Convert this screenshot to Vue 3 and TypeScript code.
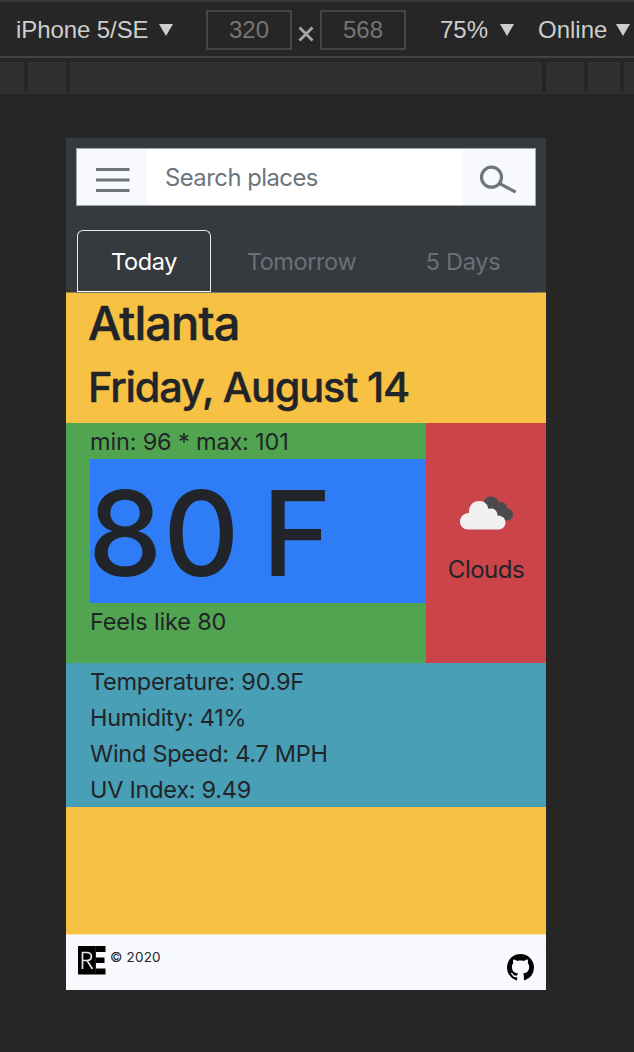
<script setup lang="ts">
const sizes = { width: 320, height: 568 }
const tabs = ['Today', 'Tomorrow', '5 Days']
const details = [
  { label: 'Temperature', value: '90.9F', key: 'temp' },
  { label: 'Humidity', value: '41%', key: 'hum' },
  { label: 'Wind Speed', value: '4.7 MPH', key: 'wind' },
  { label: 'UV Index', value: '9.49', key: 'uv' },
]
</script>

<template>
  <div class="screen">
    <header class="toolbar">
      <span class="choice device-name">iPhone 5/SE <svg class="arrow" viewBox="0 0 14 12"><path d="M0 0H14L7 12Z" /></svg></span>
      <span class="size">{{ sizes.width }}</span>
      <svg class="times" viewBox="0 0 16 16"><path d="M1.5 1.5L14.5 14.5M14.5 1.5L1.5 14.5" /></svg>
      <span class="size">{{ sizes.height }}</span>
      <span class="choice zoom">75% <svg class="arrow" viewBox="0 0 14 12"><path d="M0 0H14L7 12Z" /></svg></span>
      <span class="choice network">Online <svg class="arrow" viewBox="0 0 14 12"><path d="M0 0H14L7 12Z" /></svg></span>
    </header>
    <div class="ruler"><i /><i /><i /><i /><i /><i /></div>

    <main class="phone">
      <div class="top">
        <div class="search">
          <button class="menu" aria-label="Menu">
            <svg width="34" height="25" viewBox="0 0 34 25"><path d="M0 1.5H33.5M0 12H33.5M0 22.5H33.5" /></svg>
          </button>
          <div class="field"><span>Search places</span></div>
          <button class="go" aria-label="Search">
            <svg width="38" height="32" viewBox="0 0 38 32"><circle cx="12.500" cy="12.2" r="10" /><path d="M21.2 18.8L36.7 27.2" /></svg>
          </button>
        </div>
        <nav class="tabs">
          <a v-for="(tab, i) in tabs" :key="tab" :class="['tab', 'tab' + i, { active: i === 0 }]"><span>{{ tab }}</span></a>
        </nav>
      </div>
      <section class="place">
        <h1>Atlanta</h1>
        <h2>Friday, August 14</h2>
      </section>
      <section class="current">
        <div class="reading">
          <p><span class="range">min: 96 * max: 101</span></p>
          <div class="degrees"><span>80 F</span></div>
          <p><span class="feels">Feels like 80</span></p>
        </div>
        <div class="sky">
          <svg width="56" height="36" viewBox="0 0 56 36">
            <path class="dark" d="M24 10C25 4 28 1.5 32 1.5C36 1.5 38.5 3.500 40 7.500C45 6.500 48 9 48.500 13.500C52 14 54 16.500 54 20C54 23.500 51 25.500 48 25.500H38Z" />
            <path class="light" d="M9.500 34.500C4.500 34.500 1 31 1 26.500C1 21.500 5 18.500 10 18C9.500 10.500 14 6 20.500 6C25.500 6 28.500 9 29.500 14C34.500 12.500 38.500 15.500 38.500 20.500C43.500 20.500 46.500 23.500 46.500 27.500C46.500 31.500 43.500 34.500 39.500 34.500Z" />
          </svg>
          <span>Clouds</span>
        </div>
      </section>
      <section class="details">
        <p v-for="d in details" :key="d.key"><span :class="d.key">{{ d.label }}: {{ d.value }}</span></p>
      </section>
      <div class="space" />
      <footer>
        <svg class="logo" width="28" height="29" viewBox="0 0 28 29">
          <path d="M0 0H27.500V6H18V11.500H26.500V17H18V22.500H27.500V28.500H0Z" />
          <path class="letter" d="M4.500 23V6.500H8.500C15 6.500 15 14.500 8.500 14.500H4.500M9 14.500L14.500 23" />
          <path class="seam" d="M17.500 0V28.500" />
        </svg>
        <span class="copy">© 2020</span>
        <svg class="github" width="27" height="27" viewBox="0 0 16 16"><path d="M8 0C3.580 0 0 3.580 0 8c0 3.540 2.290 6.530 5.470 7.590.4.070.55-.17.55-.38 0-.19-.01-.82-.01-1.490-2.010.37-2.530-.49-2.690-.94-.09-.23-.48-.94-.82-1.130-.28-.15-.68-.52-.01-.53.63-.01 1.080.58 1.230.82.72 1.210 1.870.87 2.330.66.07-.52.28-.87.51-1.070-1.780-.2-3.640-.89-3.640-3.950 0-.87.31-1.590.82-2.150-.08-.2-.36-1.020.08-2.120 0 0 .67-.21 2.200.82.64-.18 1.320-.27 2-.27s1.360.09 2 .27c1.530-1.040 2.200-.82 2.200-.82.44 1.100.16 1.920.08 2.120.51.56.82 1.270.82 2.150 0 3.070-1.870 3.750-3.650 3.950.29.25.54.73.54 1.480 0 1.070-.01 1.930-.01 2.200 0 .21.15.46.55.38A8 8 0 0 0 16 8c0-4.420-3.580-8-8-8Z" /></svg>
      </footer>
    </main>
  </div>
</template>

<style>
body { background: #262626; }
</style>

<style scoped>
* { box-sizing: border-box; margin: 0; }
.screen { width: 634px; height: 1052px; overflow: hidden; background: #262626; font-family: Inter, "Noto Sans", sans-serif; color: #212529; }
.toolbar { display: flex; height: 58px; border-top: 2px solid #35353b; border-bottom: 2px solid #444; font: 24px/56px "Liberation Sans", sans-serif; color: #cdcdcd; white-space: nowrap; }
.choice { display: flex; align-items: center; gap: 10px; padding-top: 2px; }
.device-name { width: 190px; margin-left: 16px; letter-spacing: -.08px; }
.zoom { width: 98px; margin-left: 34px; gap: 12px; }
.network { gap: 9px; }
.arrow { width: 14px; height: 12px; margin-top: -1px; fill: #cdcdcd; flex: none; }
.size { width: 86px; height: 40px; margin-top: 8px; border: 2px solid #464646; color: #757575; line-height: 36px; text-align: center; }
.times { width: 16px; height: 16px; margin: 24px 6px 0; fill: none; stroke: #a8a8a8; stroke-width: 2.8; }
.ruler { display: grid; grid-template-columns: 24px 38px 472px 38px 32px 10px; column-gap: 4px; height: 32px; margin-top: 4px; background: linear-gradient(#262626 30px, #303030 30px); }
.ruler i { background: #303030; }
.phone { width: 480px; height: 852px; margin: 44px 0 0 66px; display: flex; flex-direction: column; box-shadow: 0 0 40px rgba(45, 43, 42, .6); }
.top { height: 155px; padding: 10px 10px 0; background: linear-gradient(#353a3e 154px, #9c8349 154px); flex: none; }
.search { display: grid; grid-template-columns: 70px 315px 1fr; grid-template-rows: 56px; height: 58px; border: 1px solid #a1a6aa; }
button { border: 0; padding: 0; background: #f8f9fc; }
.menu { display: flex; padding: 19px 0 0 19px; }
.search svg { fill: none; stroke: #6e757d; stroke-width: 3; }
.go { display: flex; padding: 16px 0 0 17px; }
.go svg { stroke-width: 3.200; }
.field { background: #fff; padding-left: 18px; font-size: 23.800px; line-height: 58px; color: #6c757d; white-space: nowrap; letter-spacing: -.5px; }
.tabs { display: flex; height: 63px; margin: 24px 0 0; border-bottom: 1px solid #707478; font-size: 23.500px; }
.tab { height: 62px; line-height: 64px; text-align: center; color: #6b6f78; }
.tab0 { width: 136px; letter-spacing: -.4px; }
.tab1 { width: 179px; letter-spacing: -.4px; }
.tab2 { width: 144px; letter-spacing: -.3px; }
.active { width: 134px; margin: 0 1px; line-height: 62px; color: #fff; border: 1px solid #e8e9ea; border-bottom: 1px solid #fff; border-radius: 6px 6px 0 0; }
.place { height: 130px; padding-left: 23px; background: #f7c143; flex: none; }
h1 { font-size: 47px; line-height: 59px; font-weight: 500; letter-spacing: -.950px; text-indent: -1px; -webkit-text-stroke: .5px #212529; }
h2 { font-size: 41.500px; line-height: 70px; font-weight: 500; letter-spacing: -1.200px; text-indent: -1px; white-space: nowrap; -webkit-text-stroke: .4px #212529; }
.current { display: grid; grid-template-columns: 360px 120px; height: 240px; flex: none; }
.reading { padding-left: 24px; background: #52a550; }
p { height: 36px; line-height: 37px; font-size: 23.500px; white-space: nowrap; letter-spacing: -.27px; }
.range, .feels { letter-spacing: -.17px; }
.degrees { height: 144px; line-height: 148px; background: #2e7df7; font-size: 118px; font-weight: 500; white-space: nowrap; letter-spacing: 1px; word-spacing: -11px; text-indent: -2px; }
.sky { display: flex; flex-direction: column; align-items: center; background: #cb444a; padding-top: 72px; font-size: 24px; }
.sky svg { overflow: visible; margin-left: 1px; }
.sky span { margin-top: 24px; line-height: 30px; letter-spacing: -.5px; }
.dark { fill: #4b4b4d; }
.light { fill: #f0f0f0; }
.details { height: 144px; padding-left: 24px; background: #499fb5; flex: none; }
.space { height: 127px; background: #f7c143; flex: none; }
footer { display: flex; height: 56px; padding: 11px 12px 0; background: #f8f9fc; border-top: 1px solid #fbe5b2; flex: none; }
.letter, .seam { fill: none; stroke: #e5e5e5; stroke-width: 1.700; }
.seam { stroke: #333; stroke-width: .6; }
.copy { margin-left: 4px; font-size: 13.500px; line-height: 23px; letter-spacing: .2px; }
.github { margin: 8px 0 0 auto; }
</style>
